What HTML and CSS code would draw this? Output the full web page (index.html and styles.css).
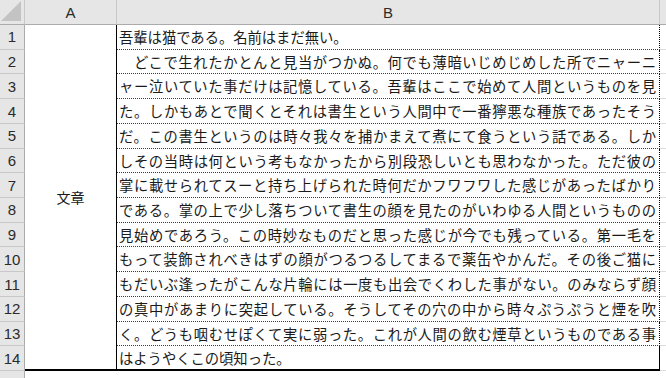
FILE: index.html
```html
<!DOCTYPE html>
<html lang="ja">
<head>
<meta charset="utf-8">
<link rel="stylesheet" href="styles.css">
</head>
<body>
<div class="sheet">
  <div class="corner"><span class="tri"></span></div>
  <div class="colhead">A</div>
  <div class="colhead">B</div>
  <div class="colhead last"></div>

  <div class="merged">文章</div>

  <div class="rowhead">1</div><div class="cell left">吾輩は猫である。名前はまだ無い。</div><div class="rest"></div>
  <div class="rowhead">2</div><div class="cell">　どこで生れたかとんと見当がつかぬ。何でも薄暗いじめじめした所でニャーニ</div><div class="rest"></div>
  <div class="rowhead">3</div><div class="cell">ャー泣いていた事だけは記憶している。吾輩はここで始めて人間というものを見</div><div class="rest"></div>
  <div class="rowhead">4</div><div class="cell">た。しかもあとで聞くとそれは書生という人間中で一番獰悪な種族であったそう</div><div class="rest"></div>
  <div class="rowhead">5</div><div class="cell">だ。この書生というのは時々我々を捕かまえて煮にて食うという話である。しか</div><div class="rest"></div>
  <div class="rowhead">6</div><div class="cell">しその当時は何という考もなかったから別段恐しいとも思わなかった。ただ彼の</div><div class="rest"></div>
  <div class="rowhead">7</div><div class="cell">掌に載せられてスーと持ち上げられた時何だかフワフワした感じがあったばかり</div><div class="rest"></div>
  <div class="rowhead">8</div><div class="cell">である。掌の上で少し落ちついて書生の顔を見たのがいわゆる人間というものの</div><div class="rest"></div>
  <div class="rowhead">9</div><div class="cell">見始めであろう。この時妙なものだと思った感じが今でも残っている。第一毛を</div><div class="rest"></div>
  <div class="rowhead">10</div><div class="cell">もって装飾されべきはずの顔がつるつるしてまるで薬缶やかんだ。その後ご猫に</div><div class="rest"></div>
  <div class="rowhead">11</div><div class="cell">もだいぶ逢ったがこんな片輪には一度も出会でくわした事がない。のみならず顔</div><div class="rest"></div>
  <div class="rowhead">12</div><div class="cell">の真中があまりに突起している。そうしてその穴の中から時々ぷうぷうと煙を吹</div><div class="rest"></div>
  <div class="rowhead">13</div><div class="cell">く。どうも咽むせぽくて実に弱った。これが人間の飲む煙草というものである事</div><div class="rest"></div>
  <div class="rowhead">14</div><div class="cell left lastrow">はようやくこの頃知った。</div><div class="rest"></div>

  <div class="rowhead tail"></div><div class="blank"></div><div class="blank"></div><div class="blank"></div>
</div>
</body>
</html>
```

FILE: styles.css
```css
html, body {
  margin: 0;
  padding: 0;
  background: #ffffff;
}

.sheet {
  width: 666px;
  height: 378px;
  overflow: hidden;
  display: grid;
  grid-template-columns: 25px 92px 543px 1fr;
  grid-template-rows: 25px repeat(14, 24.72px) 1fr;
  font-family: "Noto Sans CJK JP", "Noto Sans", sans-serif;
}

.sheet > div {
  box-sizing: border-box;
  min-width: 0;
  overflow: hidden;
}

.corner {
  background: #e6e6e6;
  border-right: 1px solid #c8c8c8;
  border-bottom: 1px solid #ababab;
  display: flex;
  justify-content: flex-end;
  align-items: flex-end;
  padding: 0 3px 3px 0;
}

.tri {
  display: block;
  width: 20px;
  height: 20px;
  background: #c3c3c3;
  clip-path: polygon(100% 0, 100% 100%, 0 100%);
}

.colhead {
  background: #e6e6e6;
  border-right: 1px solid #c8c8c8;
  border-bottom: 1px solid #ababab;
  font-family: "Liberation Sans", Arial, sans-serif;
  font-size: 15px;
  color: #2b2b2b;
  display: flex;
  align-items: center;
  justify-content: center;
}

.colhead.last {
  border-right: none;
}

.rowhead {
  background: #e6e6e6;
  border-right: 1px solid #ababab;
  border-bottom: 1px solid #c8c8c8;
  font-family: "Liberation Sans", Arial, sans-serif;
  font-size: 15px;
  color: #2b2b2b;
  display: flex;
  align-items: center;
  justify-content: center;
  grid-column: 1;
}

.rowhead.tail {
  border-bottom: none;
}

.merged {
  grid-column: 2;
  grid-row: 2 / span 14;
  background: #ffffff;
  border-right: 1px solid #000000;
  border-bottom: 2px solid #000000;
  display: flex;
  align-items: center;
  justify-content: center;
  font-size: 14px;
  color: #1a1a1a;
}

.cell {
  grid-column: 3;
  background: #ffffff;
  border-right: 1px dotted #000000;
  border-bottom: 1px dotted #3a3a3a;
  padding: 0 3px 0 2px;
  font-size: 14.3px;
  line-height: 24px;
  color: #1a1a1a;
  text-align: justify;
  text-align-last: justify;
  text-justify: inter-character;
  white-space: normal;
}

.cell.left {
  text-align: left;
  text-align-last: left;
}

.cell.lastrow {
  border-bottom: 2px solid #000000;
  border-right: 1px solid #000000;
}

.rest {
  grid-column: 4;
  background: #ffffff;
  border-bottom: 1px solid #dcdcdc;
}

.blank {
  background: #ffffff;
}
```
